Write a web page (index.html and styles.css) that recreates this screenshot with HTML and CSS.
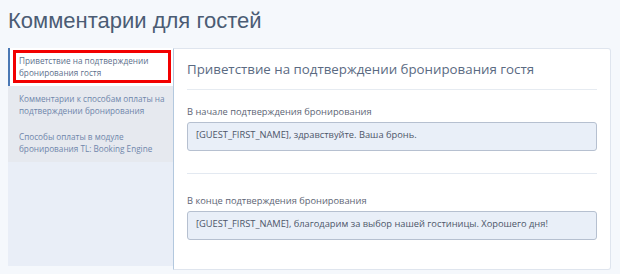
FILE: index.html
```html
<!DOCTYPE html>
<html lang="ru">
<head>
  <meta charset="UTF-8" />
  <title>Комментарии для гостей</title>
  <link rel="stylesheet" href="styles.css">
</head>
<body>

<h1 class="page-title">Комментарии для гостей</h1>

<div class="comments">
  <ul class="tabs">
    <li class="tab active">Приветствие на подтверждении бронирования гостя</li>
    <li class="tab">Комментарии к способам оплаты на подтверждении бронирования</li>
    <li class="tab">Способы оплаты в модуле бронирования TL: Booking Engine</li>
  </ul>

  <div class="panel">
    <h2 class="panel-title">Приветствие на подтверждении бронирования гостя</h2>

    <div class="field">
      <label>В начале подтверждения бронирования</label>
      <div class="input">[GUEST_FIRST_NAME], здравствуйте. Ваша бронь.</div>
    </div>

    <div class="field">
      <label>В конце подтверждения бронирования</label>
      <div class="input">[GUEST_FIRST_NAME], благодарим за выбор нашей гостиницы. Хорошего дня!</div>
    </div>
  </div>
</div>

</body>
</html>
```

FILE: styles.css
```css
body {
  margin: 0;
  padding: 0 8px;
  background: #f5f8fc;
  font-family: "Open Sans", sans-serif;
  color: #5a6478;
}

.page-title {
  margin: 0;
  padding-top: 6px;
  height: 42px;
  font-family: "Liberation Sans", Arial, sans-serif;
  font-weight: normal;
  font-size: 22px;
  line-height: 30px;
  color: #4b5c74;
}

.comments {
  display: flex;
  align-items: flex-start;
  margin-right: 1px;
}

.tabs {
  list-style: none;
  margin: 0;
  padding: 0;
  width: 165px;
  height: 218px;
  background: #e9eef7;
  flex-shrink: 0;
}

.tab {
  box-sizing: border-box;
  height: 38px;
  padding: 7px 4px 0 11px;
  font-size: 8.2px;
  line-height: 12px;
  color: #6f86ab;
  background: #e6e9ef;
}

.tab.active {
  position: relative;
  background: #fff;
  color: #5d6f8c;
  border-left: 2px solid #4a78b4;
  padding-left: 9px;
}

/* red annotation box from the screenshot */
.tab.active::after {
  content: "";
  position: absolute;
  left: 3px;
  top: 2px;
  right: 2px;
  bottom: 3px;
  border: 3px solid #f20000;
}

.panel {
  flex: 1;
  background: #fff;
  border: 1px solid #dfe5ee;
  border-left: 1px solid #b3c8de;
  border-radius: 0 3px 3px 0;
  padding: 0 13px 28px;
  min-height: 192px;
}

.panel-title {
  margin: 0;
  padding: 11px 0 11px;
  font-weight: normal;
  font-size: 13.3px;
  line-height: 18px;
  color: #5a6a82;
  border-bottom: 1px solid #e6ebf1;
}

.field {
  padding-top: 15px;
}

.field + .field {
  margin-top: 22px;
  border-top: 1px solid #e3e9f1;
  padding-top: 20px;
}

.field label {
  display: block;
  font-size: 9.3px;
  line-height: 14px;
  color: #5c6474;
  margin-bottom: 3px;
}

.input {
  background: #e9eff8;
  border: 1px solid #b6c0d0;
  border-radius: 3px;
  padding: 5px 8px;
  height: 17px;
  font-size: 9.3px;
  line-height: 14px;
  color: #4d5668;
}
```
